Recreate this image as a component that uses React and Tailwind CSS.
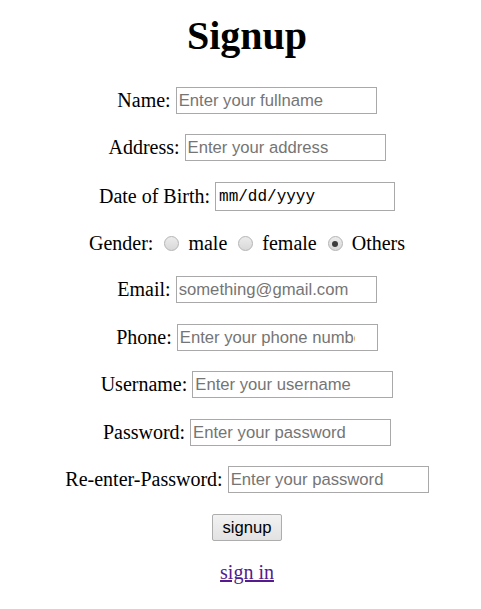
import React from 'react';

const serif = "font-['Liberation_Serif','Times_New_Roman',serif]";
const sans = "font-['Liberation_Sans',Arial,sans-serif]";

const Field = ({ label, placeholder, className, inputClass = 'pr-[2px]' }) => (
  <div className={`flex items-center justify-center h-[27px] ${className}`}>
    <span className="text-[20px] leading-[23px] mr-[5px]">{label}</span>
    <input
      type="text"
      placeholder={placeholder}
      className={`w-[201px] h-[27px] border border-[#a9a9a9] pl-[2px] ${inputClass} text-[16.67px] ${sans} text-black placeholder:text-[#757575] outline-none bg-white`}
    />
  </div>
);

const Radio = ({ checked }) => (
  <span className="ml-[6px] mr-[4px] w-[15px] h-[15px] rounded-full border border-[#b4b4b4] bg-gradient-to-b from-[#ececec] to-[#d8d8d8] flex items-center justify-center shrink-0">
    {checked && <span className="w-[6px] h-[6px] rounded-full bg-[#3c3c3c]" />}
  </span>
);

export default function App() {
  return (
    <div className={`${serif} text-black bg-white min-h-[609px] pl-[13px] flex flex-col items-center`}>
      <h1 className="text-[40px] font-bold leading-[46px] mt-[13px] h-[46px]">Signup</h1>

      <Field label="Name:" placeholder="Enter your fullname" className="mt-[28px]" />
      <Field label="Address:" placeholder="Enter your address" className="mt-[20px]" />

      <div className="flex items-center justify-center h-[29px] mt-[21px]">
        <span className="text-[20px] leading-[23px] mr-[5px]">Date of Birth:</span>
        <input
          type="text"
          defaultValue="mm/dd/yyyy"
          className="w-[180px] h-[29px] border border-[#a9a9a9] pl-[3px] text-[16px] font-['Liberation_Mono','DejaVu_Sans_Mono',monospace] text-black outline-none bg-white"
        />
      </div>

      <div className="flex items-center justify-center h-[25px] mt-[20px] text-[20px] leading-[23px]">
        <span>Gender:</span>
        <span className="w-[5px]" />
        <Radio />
        <span className="ml-[5px]">male</span>
        <span className="w-[5px]" />
        <Radio />
        <span className="ml-[5px]">female</span>
        <span className="w-[5px]" />
        <Radio checked />
        <span className="ml-[5px]">Others</span>
      </div>

      <Field label="Email:" placeholder="something@gmail.com" className="mt-[20px]" />
      <Field label="Phone:" placeholder="Enter your phone number" className="mt-[21px]" inputClass="pr-[22px]" />
      <Field label="Username:" placeholder="Enter your username" className="mt-[20px]" />
      <Field label="Password:" placeholder="Enter your password" className="mt-[21px]" />
      <Field label="Re-enter-Password:" placeholder="Enter your password" className="mt-[20px]" />

      <button
        type="button"
        className={`mt-[21px] w-[70px] h-[27px] border border-[#adadad] rounded-[2px] bg-gradient-to-b from-[#f2f2f2] to-[#e2e2e2] text-[16.67px] ${sans} text-black flex items-center justify-center`}
      >
        signup
      </button>

      <a href="#" className="mt-[20px] text-[20px] leading-[23px] text-[#551a8b] underline">
        sign in
      </a>
    </div>
  );
}
